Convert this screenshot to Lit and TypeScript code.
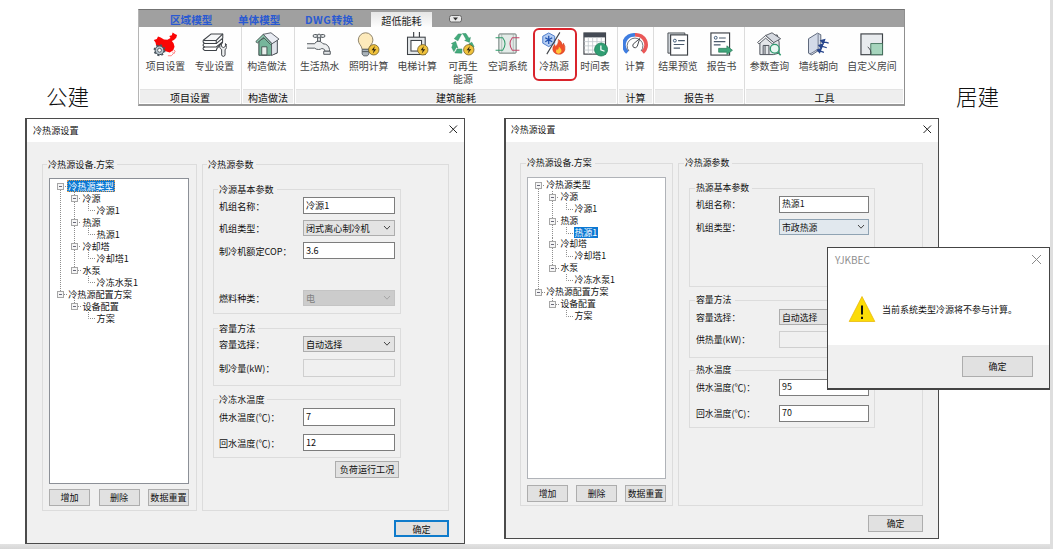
import { LitElement, html, svg, css, nothing } from "lit";
import { customElement, property } from "lit/decorators.js";
import { classMap } from "lit/directives/class-map.js";
import { styleMap } from "lit/directives/style-map.js";

const bolt = svg`<circle cx="18.5" cy="18.5" r="5.4" fill="#f0c23c" stroke="#6d5a28" stroke-width=".8"/>
  <path d="M19.6 14.6l-3.4 4.3h2.3l-1 3.4 3.6-4.4h-2.4z" fill="#2d2410"/>`;

const icons: Record<string, unknown> = {
  map: svg`<path d="M.8 8.2L4 7.4 5.2 4.6 8 5.6 11.4 7.8 15 8 18.2 6.2 17 4.2 19.6 3.4 20.4.6 22.8 2.2 25 3 24.2 6 21.8 8.2 19.6 9.4 21.4 11.6 22.4 15.4 21 19 17.4 21.4 14 20.4 11.6 19.4 9 17 5.4 15.8 3.2 13.6 2.6 11z" fill="#fb0505"/>
    <path d="M20.5 20.5q2 2-1.5 4.2h-3.5M21.5 18.6l1.6 1.2-1.4 3" fill="none" stroke="#f66" stroke-width=".8"/>
    <circle cx="6.800" cy="19" r="4.600" fill="#b9c6cf" stroke="#37424a" stroke-width="1"/>
    <circle cx="6.800" cy="19" r="5.400" fill="none" stroke="#4a565f" stroke-width="1.600" stroke-dasharray="2.100 2.140"/>
    <circle cx="6.800" cy="19" r="2" fill="#fff" stroke="#37424a" stroke-width=".8"/>`,
  books: svg`<g fill="#fff" stroke="#3e4247" stroke-width="1.100" stroke-linejoin="round">
    <path d="M1.400 16.400L9 11h12.400l-6 6.400-.6 1.800H3q-2.600-1-1.600-2.800z"/><path d="M1.400 12.600L9 7.400h12.400v3l-6.600 5.200H3q-2.600-1-1.600-3z"/>
    <path d="M1.400 8.600L9.600 2h12v4.400L14.800 12H3Q.4 11 1.400 8.600z" fill="#f6f7f8"/><path d="M1.800 8.800h13l6.800-6.800M14.800 8.800V12" fill="none"/></g>
    <path d="M20.200 12v3l2 1.200 2.200-1.200v-3q2.200 1.400 1.400 4-.4 1.400-1.800 2.200v5.600q-.4 1.600-1.800 1.600t-1.800-1.600v-5.600q-1.600-.8-2-2.400-.4-2.600 1.800-3.800z" fill="#eceeef" stroke="#3e4247" stroke-width="1"/>`,
  house: svg`<path d="M4 9.500L13 4l10 5v13l-7 2.200H4z" fill="#76b69b" stroke="#3b4a48" stroke-width="1"/>
    <path d="M17.200 12l6-3.500v13l-6 3z" fill="#dfe3ea" stroke="#4a4f57" stroke-width=".9"/>
    <path d="M.8 10L8.600 2.400 17.800 12.200 16.400 13.200 8.800 5.600 2.400 11.400z" fill="#8fc9b0" stroke="#3b4a48" stroke-width=".9"/>
    <path d="M8.600 2.400L16.600.8 25 7.400l-7.200 4.800z" fill="#e9ecf3" stroke="#4a4f57" stroke-width=".9"/>
    <path d="M7 23.800v-8.400h5.400v8.400z" fill="#e8efec" stroke="#3b4a48" stroke-width=".9"/>`,
  tap: svg`<g fill="#e3e6e8" stroke="#50565c" stroke-width="1"><path d="M0 12.200h8q1-2.600 4-2.600t4.600 2.600q5.800.2 6.800 6v1.800h-5v-1.200q-.6-1.600-3-1.600-1.400 1-3.400 1-2.600 0-4-1.400H0" fill="#eceeef"/>
    <path d="M17.400 20h6.800v3.200h-6.800zM11 9.600V5.400h3v4.200z"/><rect x="6.400" y="2.600" width="4.600" height="3" rx="1.500"/><rect x="14" y="2.600" width="4.600" height="3" rx="1.500"/><circle cx="12.500" cy="4.200" r="2"/></g>`,
  bulb: svg`<path d="M10 .8a7.600 7.600 0 0 0-7.600 7.600c0 4.200 3.600 5.600 4 9.600h7c.4-4 4.200-5.400 4.200-9.600A7.600 7.600 0 0 0 10 .8z" fill="#fdeabb" stroke="#8d8168" stroke-width="1"/>
    <path d="M6.400 18h7v5l-1.600 1.800H8L6.400 23z" fill="#aab3ba" stroke="#4e565c" stroke-width=".9"/><path d="M6.400 20.400h7" stroke="#4e565c"/>${bolt}`,
  lift: svg`<path d="M9 0v5.500M15 0v5.500" stroke="#3e4247" stroke-width="1.200"/><rect x="2.600" y="5.400" width="18.400" height="18" fill="#e5e8ea" stroke="#3e4247" stroke-width="1.100"/>
    <rect x="6.200" y="8.800" width="11" height="11" fill="#fff" stroke="#3e4247" stroke-width="1.100"/>${bolt}`,
  recycle: svg`<g fill="#43ab7c" stroke="#2d8a60" stroke-width=".5" stroke-linejoin="round"><path d="M7.200 9.200L11 2h-3.400L3.400 7z"/><path d="M11.800 1.600h3.800l3 4.800 1.600-.8-1 5.200-5-2 1.600-1-2.400-4.200z"/>
    <path d="M4.800 9.800L.4 12l1.600.8L.8 16l2.200 4.400 2.600-4.600 1.600 1z"/><path d="M4 21.800l2.400-4.200h5V22z"/><path d="M18.400 12.600l3.200-2L24 15l-1.600 2z"/></g>${bolt}`,
  hvac: svg`<rect x="4" y="2" width="18" height="20" rx="1" fill="#e3ebe8" stroke="#6a7672" stroke-width="1"/><path d="M7 2v20M19 2v20" stroke="#9aa8a3" stroke-width=".7"/>
    <path d="M.6 6h7.400q4.800 6 0 13H.6" fill="none" stroke="#2f9b6a" stroke-width="1.100"/><path d="M25.400 6H18q-4.800 6 0 13h7.400" fill="none" stroke="#c2476a" stroke-width="1.100"/>`,
  source: svg`<path d="M7 1l6.200 3.400v7.200L7 15.200.8 11.600V4.400z" fill="#b4cdf3" stroke="#4a79c8" stroke-width="1"/><path d="M7 4v8.400M3.400 6l7.200 4.200M10.600 6L3.400 10.200" stroke="#1d4fae" stroke-width="1.300"/>
    <path d="M18.600.4L5 23" stroke="#3e4247" stroke-width="1.100"/>
    <path d="M17 7.600q4 2.400 3.800 6 1.200-.6 1.400-2.200 2.600 3.600 1.600 7.200-1.600 4.600-6.400 4.600-5.200-.2-6.200-4.800-.4-3 2-5.600.2 1.600 1.200 2.200 3.200-3.200 2.600-7.400z" fill="#f0502a" stroke="#c3381c" stroke-width=".5"/>
    <path d="M17.600 15.400q3.200 2.600 2.600 5-.8 2.200-2.800 2.200-2.800-.2-2.800-2.600 0-1.200 1-2.200l.8 1q1.200-1.600 1.200-3.400z" fill="#ffc83d"/>`,
  schedule: svg`<rect x="1" y="1" width="22.400" height="22" fill="#fff" stroke="#3e4247" stroke-width="1.200"/><rect x="1" y="1" width="22.400" height="4.600" fill="#454b55"/>
    <path d="M1 10h22M1 14.400h22M1 18.800h22M5.500 5.600V23M10 5.600V23M14.500 5.600V23M19 5.600V23" stroke="#bfc5cb" stroke-width=".8"/>
    <circle cx="18.800" cy="18.200" r="6.800" fill="#2f9e72" stroke="#1f7d58" stroke-width=".8"/><path d="M18.600 14v4.600l3.800 1.400" fill="none" stroke="#fff" stroke-width="1.300"/>`,
  gauge: svg`<path d="M4.600 21.200A10.400 10.400 0 0 1 12.500 3" fill="none" stroke="#3f7de0" stroke-width="4"/><path d="M12.500 3a10.400 10.400 0 0 1 7.900 18.200" fill="none" stroke="#ea5858" stroke-width="4"/>
    <path d="M6.200 19.800A8.200 8.200 0 1 1 18.800 19.800" fill="none" stroke="#454b55" stroke-width=".8"/>
    <path d="M10.600 12.600L17.400 6.800 14.800 15q-1.600 2-3.600 1.200-1.800-1.600-.6-3.600z" fill="#fff" stroke="#3e4247" stroke-width="1"/>`,
  preview: svg`<path d="M2 1h17.600v3H5v18H2z" fill="#cfd4d9" stroke="#3e4247" stroke-width=".9"/><rect x="4.800" y="3" width="17.600" height="21" fill="#fff" stroke="#3e4247" stroke-width="1.200"/>
    <circle cx="9.200" cy="9" r="1.500" fill="none" stroke="#3e5a78"/><path d="M12.600 9h7M8 13h11M8 16.800h6.600" stroke="#4a5a6c" stroke-width="1.200"/>`,
  report: svg`<rect x="2" y="1" width="19.400" height="23" fill="#fff" stroke="#3e4247" stroke-width="1.200"/><circle cx="7" cy="6" r="1.500" fill="none" stroke="#3e5a78"/><path d="M10.400 6.200h7M5 10h12M5 13.400h7" stroke="#4a5a6c" stroke-width="1.200"/>
    <path d="M10 17h8.600v-2.600l5.800 4.600-5.800 4.400V21H10z" fill="#3fa57a" stroke="#2a7a58" stroke-width=".7"/>`,
  query: svg`<path d="M3 9.800L9 6l12-3 2 7.500V22l-6 1.500H3z" fill="#e4e6ea" stroke="#4a4f57"/><path d="M.6 10.800L9 3.600l8.400 7.400-1.200 1.600L9 6.400 2 12.400z" fill="#f6f7f9" stroke="#4a4f57" stroke-width=".9"/>
    <path d="M9 3.600L15.600.8 24.600 7l-7.200 4z" fill="#d6dae1" stroke="#4a4f57" stroke-width=".9"/><path d="M6.400 23.200V14h6v9.200M8.400 14v9" fill="none" stroke="#4a4f57"/>
    <circle cx="18.400" cy="17.400" r="4.600" fill="#e8f7f1" stroke="#2f9b6f" stroke-width="1.400"/><path d="M21.600 20.800l3 3.400" stroke="#2f9b6f" stroke-width="1.600"/>`,
  wall: svg`<path d="M2.600 7L12 1.200l3.400 1.600v14.800L6 23.800 2.600 22z" fill="#d3dae8" stroke="#5a6478" stroke-width="1"/><path d="M12.600 2.200v15.600L4 23M12.600 17.800l2.800.4" fill="none" stroke="#5a6478" stroke-width=".8"/>
    <g stroke="#27458c" stroke-width="1.300" fill="#27458c"><path d="M23.600 11.600L16.600 9.400M19.400 8l-4 1 2.600 3zM21.600 16.400l-7-2.200M17.400 12.800l-4 1 2.600 3zM18.600 21.200l-5.600-2M15.600 17.600l-3.800 1.200 2.400 2.600z"/></g>`,
  room: svg`<rect x="1" y="2" width="22.400" height="21.600" fill="#e8ebee" stroke="#3e4247" stroke-width="1.200"/><path d="M11.200 12h12.200v11.600H11.200z" fill="#a6d5bd" stroke="#3d6d57" stroke-width=".9"/>
    <path d="M8 15.600q4 2.600 3.200 8" fill="none" stroke="#3e4247"/>`,
};

interface Tool { label: string; icon: string; w: number; active?: boolean }
interface ToolGroup { title: string; w: number; pad: number; tools: Tool[] }

const toolGroups: ToolGroup[] = [
  { title: "项目设置", w: 103, pad: 2, tools: [{ label: "项目设置", icon: "map", w: 49 }, { label: "专业设置", icon: "books", w: 49 }] },
  { title: "构造做法", w: 53, pad: 0, tools: [{ label: "构造做法", icon: "house", w: 50 }] },
  { title: "建筑能耗", w: 323, pad: 0, tools: [
    { label: "生活热水", icon: "tap", w: 49.5 }, { label: "照明计算", icon: "bulb", w: 48.5 }, { label: "电梯计算", icon: "lift", w: 48.5 },
    { label: "可再生能源", icon: "recycle", w: 43 }, { label: "空调系统", icon: "hvac", w: 46.5 }, { label: "冷热源", icon: "source", w: 44, active: true },
    { label: "时间表", icon: "schedule", w: 36 }] },
  { title: "计算", w: 36, pad: 0, tools: [{ label: "计算", icon: "gauge", w: 34 }] },
  { title: "报告书", w: 91, pad: 1, tools: [{ label: "结果预览", icon: "preview", w: 46 }, { label: "报告书", icon: "report", w: 41 }] },
  { title: "工具", w: 161, pad: 0, tools: [{ label: "参数查询", icon: "query", w: 49 }, { label: "墙线朝向", icon: "wall", w: 49 }, { label: "自定义房间", icon: "room", w: 58 }] },
];

@customElement("tool-ribbon")
class ToolRibbon extends LitElement {
  static styles = css`
    :host { display: block; box-sizing: border-box; height: 97px; border-top: 1.500px solid #737373; border-bottom: 2px solid #979797; border-left: 1px solid #b5b5b5; border-right: 1px solid #8f8f8f; background: #fefefe; }
    .tabs { display: flex; height: 17px; padding-left: 31px; background: #a0a0a0; font-size: 10.600px; line-height: 20px; color: #2a5ad2; font-weight: 700; white-space: nowrap; }
    .tab { width: 68px; }
    .tab.dwg { width: 65px; letter-spacing: .55px; margin-left: -1px; padding-right: 1px; }
    .tab.on { width: 61px; height: 15px; margin-top: 2px; line-height: 17px; text-align: center; background: linear-gradient(#e6e6e6, #fdfdfd); color: #222; font-weight: 400; font-size: 10.100px; }
    .drop { display: block; margin: 5px 0 0 17px; }
    .groups { display: flex; height: 77px; }
    .group { box-sizing: border-box; flex: none; display: flex; flex-direction: column; border-right: 1px solid #dcdcdc; }
    .group:last-child { flex: 1; border-right: 0; }
    .tools { display: flex; height: 62px; }
    .tool { box-sizing: border-box; flex: none; display: flex; flex-direction: column; align-items: center; margin-top: 1px; padding-top: 4px; height: 53px; font-size: 9.900px; line-height: 13px; color: #444; text-align: center; }
    .tool.on { border: 2px solid #d9232b; border-radius: 6px; padding-top: 2px; margin-left: 2px; padding-right: 2px; }
    .tool svg { display: block; flex: none; }
    .name { margin-top: 3px; white-space: nowrap; }
    .name.wrap { width: 31px; white-space: normal; }
    .title { margin: 0 1px; height: 14px; padding-top: 1px; box-sizing: border-box; background: #eeeeee; border-top: 1px solid #e3e3e3; font-size: 10px; line-height: 14px; text-align: center; color: #111; }
  `;
  render() {
    return html`
      <div class="tabs">
        <div class="tab">区域模型</div><div class="tab">单体模型</div><div class="tab dwg">DWG转换</div><div class="tab on">超低能耗</div>
        <svg class="drop" width="13" height="8"><rect x=".5" y=".5" width="12" height="6.500" rx="2" fill="#e9e9e9" stroke="#666" /><path d="M4 2.500h5L6.500 5.500z" fill="#333" /></svg>
      </div>
      <div class="groups">
        ${toolGroups.map((g) => html`
          <div class="group" style=${styleMap({ width: `${g.w}px` })}>
            <div class="tools" style=${styleMap({ paddingLeft: `${g.pad}px` })}>
              ${g.tools.map((t) => html`
                <div class=${classMap({ tool: true, on: !!t.active })} style=${styleMap({ width: `${t.w}px` })}>
                  <svg width="25" height="25" viewBox="0 0 26 26">${icons[t.icon]}</svg>
                  <div class=${classMap({ name: true, wrap: t.icon === "recycle" })}>${t.label}</div>
                </div>`)}
            </div>
            <div class="title">${g.title}</div>
          </div>`)}
      </div>`;
  }
}

/* Cells drawn before a label: "|" guide, " " blank, "t" top node, "e" inner node, "x" last inner node, "l" last root node, "L" leaf elbow. */
const treeRows: [string, string][] = [
  ["t", "冷热源类型"], ["|e", "冷源"], ["||L", "冷源1"], ["|e", "热源"], ["||L", "热源1"], ["|e", "冷却塔"], ["||L", "冷却塔1"],
  ["|x", "水泵"], ["| L", "冷冻水泵1"], ["l", "冷热源配置方案"], [" x", "设备配置"], ["  L", "方案"],
];

@customElement("source-tree")
class SourceTree extends LitElement {
  @property() selected = "";
  @property({ type: Number }) row = 12;
  static styles = css`
    :host { display: block; box-sizing: border-box; background: #fff; border: 1px solid #8c9097; padding: 1px 0 0 3px; }
    .row { display: flex; align-items: center; white-space: nowrap; color: #111; }
    .row svg { display: block; flex: none; }
    .text { padding: 0 1px; }
    .text.sel { background: #0b78d3; color: #fff; }
    .text.edge { outline: 1px dotted #d99a55; outline-offset: -1px; }
  `;
  cell(c: string) {
    const h = this.row;
    const dash = (d: string) => svg`<path d=${d} fill="none" stroke="#8b8b8b" stroke-width="1" stroke-dasharray="1 1"/>`;
    let lines: unknown = nothing;
    if (c === "|") lines = dash(`M7.500 0V${h}`);
    if (c === "t") lines = dash(`M7.500 6V${h}M8 6.500H14`);
    if (c === "e") lines = dash(`M7.500 0V${h}M8 6.500H14`);
    if (c === "x" || c === "l" || c === "L") lines = dash(`M7.500 0V6.500H14`);
    return html`<svg width="14.200" height=${h} viewBox="0 0 14.200 ${h}">${lines}${"texl".includes(c)
      ? svg`<rect x="4.500" y="3.500" width="6" height="6" fill="#f6f6f6" stroke="#a6a6a6"/><path d="M6 6.500h3" stroke="#667"/>`
      : nothing}</svg>`;
  }
  render() {
    return treeRows.map(([cells, text]) => html`
      <div class="row" style=${styleMap({ height: `${this.row}px`, lineHeight: `${this.row}px` })}>
        ${[...cells].map((c) => this.cell(c))}
        <span class=${classMap({ text: true, sel: text === this.selected, edge: text === this.selected && cells === "t" })}>${text}</span>
      </div>`);
  }
}

interface Field { label: string; kind: "input" | "combo"; value: string; gap: number; h: number; off?: boolean; hot?: boolean }
interface Box { title: string; gap: number; h: number; fields: Field[] }
interface Config {
  side: "left" | "right"; selected: string; row: number; boxes: Box[]; extra?: string;
}

const publicConfig: Config = {
  side: "left", selected: "冷热源类型", row: 12, extra: "负荷运行工况",
  boxes: [
    { title: "冷源基本参数", gap: 24, h: 125, fields: [
      { label: "机组名称：", kind: "input", value: "冷源1", gap: 7, h: 17 },
      { label: "机组类型：", kind: "combo", value: "闭式离心制冷机", gap: 6, h: 16 },
      { label: "制冷机额定COP：", kind: "input", value: "3.6", gap: 6, h: 17 },
      { label: "燃料种类：", kind: "combo", value: "电", gap: 31, h: 16, off: true }] },
    { title: "容量方法", gap: 14, h: 58, fields: [
      { label: "容量选择：", kind: "combo", value: "自动选择", gap: 7, h: 16 },
      { label: "制冷量(kW)：", kind: "input", value: "", gap: 7, h: 18, off: true }] },
    { title: "冷冻水温度", gap: 13, h: 59, fields: [
      { label: "供水温度(℃)：", kind: "input", value: "7", gap: 8, h: 18 },
      { label: "回水温度(℃)：", kind: "input", value: "12", gap: 8, h: 17 }] },
  ],
};

const homeConfig: Config = {
  side: "right", selected: "热源1", row: 11.9,
  boxes: [
    { title: "热源基本参数", gap: 24, h: 99, fields: [
      { label: "机组名称：", kind: "input", value: "热源1", gap: 7, h: 17 },
      { label: "机组类型：", kind: "combo", value: "市政热源", gap: 6, h: 16, hot: true }] },
    { title: "容量方法", gap: 13, h: 58, fields: [
      { label: "容量选择：", kind: "combo", value: "自动选择", gap: 8, h: 16 },
      { label: "供热量(kW)：", kind: "input", value: "", gap: 6, h: 17, off: true }] },
    { title: "热水温度", gap: 12, h: 58, fields: [
      { label: "供水温度(℃)：", kind: "input", value: "95", gap: 8, h: 17 },
      { label: "回水温度(℃)：", kind: "input", value: "70", gap: 9, h: 17 }] },
  ],
};

@customElement("source-dialog")
class SourceDialog extends LitElement {
  @property({ attribute: false }) config!: Config;
  static styles = css`
    :host { display: block; color: #111; }
    .window { box-sizing: border-box; border: 1px solid #4b4b4b; border-left-width: 2px; background: #f0f0f0; width: 440px; height: 426px; font-size: 9.100px; }
    .right.window { width: 435px; height: 421px; font-size: 8.900px; }
    .bar { box-sizing: border-box; display: flex; justify-content: space-between; align-items: center; height: 23px; padding: 0 5px 2px 6px; background: #fff; }
    .right .bar { padding-left: 5px; }
    .body { display: flex; gap: 5px; height: 347px; padding: 22px 0 0 15px; }
    .right .body { height: 343px; padding: 21px 0 0 14px; }
    .frame { box-sizing: border-box; border: 1px solid #dcdcdc; }
    .legend { display: block; width: max-content; height: 12px; margin: -7px 0 0 4px; padding: 0 3px 0 1px; background: #f0f0f0; line-height: 12px; white-space: nowrap; }
    .right .legend { margin-left: 5px; }
    .frame.devices .legend { margin-left: -2px; }
    .right .frame.devices .legend { margin-left: -1px; }
    .devices { width: 155px; padding: 0 7px 0 6px; }
    .right .devices { width: 153px; padding-right: 6px; }
    source-tree { height: 306px; margin-top: 8px; }
    .right source-tree { height: 302px; border-color: #b0b3b8; margin-top: 8px; }
    .actions { display: flex; justify-content: space-between; margin-top: 5px; }
    .right .actions { margin-top: 6px; }
    .btn { box-sizing: border-box; height: 17px; width: 41px; border: 1px solid #adadad; background: #e1e1e1; line-height: 15px; text-align: center; white-space: nowrap; }
    .params { width: 247px; }
    .right .params { width: 245px; }
    .box { width: 188px; margin-left: 10px; }
    .right .box { width: 186px; }
    .field { display: flex; align-items: center; padding-left: 5px; }
    .right .field { padding-left: 6px; }
    .label { width: 84px; white-space: nowrap; }
    .right .label { width: 83px; }
    .ctl { box-sizing: border-box; width: 92px; height: 100%; display: flex; justify-content: space-between; align-items: center; padding: 0 3px 2px 2px; border: 1px solid #7d7d7d; background: #fff; white-space: nowrap; }
    .right .ctl { width: 90px; }
    .ctl.combo { background: #e3e3e3; border-color: #adadad; padding-bottom: 0; }
    .ctl.hot { background: #e1e8ee; border-color: #8fa3b3; }
    .ctl.off { background: #f0f0f0; border-color: #cfcfcf; }
    .ctl.combo.off { background: #cccccc; border-color: #c4c4c4; color: #808080; }
    .extra { width: 64px; margin: 3px 0 0 132px; }
    .ok { width: 55px; margin: 9px 0 0 367px; }
    .right .ok { margin: 9px 0 0 362px; }
    .ok.focus { border: 2px solid #0f7bcb; line-height: 14px; }
    svg { display: block; flex: none; }
  `;
  render() {
    const c = this.config;
    return html`
      <div class="window ${c.side}">
        <div class="bar"><span>冷热源设置</span><svg width="11" height="11"><path d="M1.500 1.500l7.500 7.500M9 1.500L1.500 9" stroke="#222" stroke-width="1" /></svg></div>
        <div class="body">
          <div class="frame devices">
            <span class="legend">冷热源设备.方案</span>
            <source-tree .selected=${c.selected} .row=${c.row}></source-tree>
            <div class="actions"><div class="btn">增加</div><div class="btn">删除</div><div class="btn">数据重置</div></div>
          </div>
          <div class="frame params">
            <span class="legend">冷热源参数</span>
            ${c.boxes.map((b, i) => html`
              <div class="frame box" style=${styleMap({ height: `${b.h}px`, marginTop: `${i ? b.gap : b.gap - 5}px` })}>
                <span class="legend">${b.title}</span>
                ${b.fields.map((f, j) => html`
                  <div class="field" style=${styleMap({ height: `${f.h}px`, marginTop: `${j ? f.gap : f.gap - 5}px` })}>
                    <span class="label">${f.label}</span>
                    <div class=${classMap({ ctl: true, combo: f.kind === "combo", off: !!f.off, hot: !!f.hot })}>
                      <span>${f.value}</span>
                      ${f.kind === "combo" ? html`<svg width="8" height="6"><path d="M1 1l3 3.200L7 1" fill="none" stroke=${f.off ? "#a5a5a5" : "#444"} /></svg>` : nothing}
                    </div>
                  </div>`)}
              </div>`)}
            ${c.extra ? html`<div class="btn extra">${c.extra}</div>` : nothing}
          </div>
        </div>
        <div class=${classMap({ btn: true, ok: true, focus: c.side === "left" })}>确定</div>
      </div>`;
  }
}

@customElement("alert-window")
class AlertWindow extends LitElement {
  static styles = css`
    :host { box-sizing: border-box; display: flex; flex-direction: column; width: 223px; height: 143px; border: 1.500px solid #444; border-bottom-width: 2px; background: #fff; font-size: 9px; color: #111; }
    .bar { display: flex; justify-content: space-between; padding: 6px 7px 0 7px; height: 14px; font-size: 10px; line-height: 11px; color: #8f8f8f; }
    .message { flex: 1; display: flex; align-items: center; gap: 6px; padding: 5px 0 0 20px; }
    .foot { display: flex; justify-content: flex-end; height: 43px; background: #f0f0f0; padding: 11px 16px 0 0; box-sizing: border-box; }
    .btn { box-sizing: border-box; width: 71px; height: 21px; border: 1px solid #adadad; background: #e1e1e1; line-height: 19px; text-align: center; }
    svg { display: block; flex: none; }
  `;
  render() {
    return html`
      <div class="bar"><span>YJKBEC</span><svg width="11" height="11"><path d="M1 1l9 9M10 1L1 10" stroke="#8a8a8a" /></svg></div>
      <div class="message">
        <svg width="28" height="28" viewBox="0 0 28 28"><path d="M14 1.500L26.800 26.500H1.200z" fill="#fbdb08" stroke="#e8b90c" stroke-width=".8" stroke-linejoin="round" /><path d="M14 10.500v9M14 21.800v2.200" stroke="#111" stroke-width="2" /></svg>
        <span>当前系统类型冷源将不参与计算。</span>
      </div>
      <div class="foot"><div class="btn">确定</div></div>`;
  }
}

@customElement("app-root")
class AppRoot extends LitElement {
  static styles = css`
    :host { display: flex; width: 1053px; height: 549px; background: #fff; overflow: hidden; font-family: "Noto Sans CJK SC", sans-serif; }
    .page { position: relative; flex: 1; display: flex; flex-direction: column; }
    .head { display: grid; grid-template-columns: 138px 767px 1fr; height: 109px; padding-top: 9px; }
    .caption { padding: 72px 0 0 46px; font-weight: 300; font-size: 21.500px; line-height: 30px; color: #111; white-space: nowrap; }
    .caption.home { padding-left: 51px; }
    .windows { display: flex; align-items: flex-start; gap: 39px; padding-left: 25px; height: 426px; }
    .floor { flex: 1; background: linear-gradient(#e3e3e3, #d6d6d6); }
    .edge { width: 3px; background: #dedede; }
    alert-window { position: absolute; left: 827px; top: 247px; }
  `;
  render() {
    return html`
      <div class="page">
        <div class="head"><div class="caption">公建</div><tool-ribbon></tool-ribbon><div class="caption home">居建</div></div>
        <div class="windows"><source-dialog .config=${publicConfig}></source-dialog><source-dialog .config=${homeConfig}></source-dialog></div>
        <div class="floor"></div>
        <alert-window></alert-window>
      </div>
      <div class="edge"></div>`;
  }
}
